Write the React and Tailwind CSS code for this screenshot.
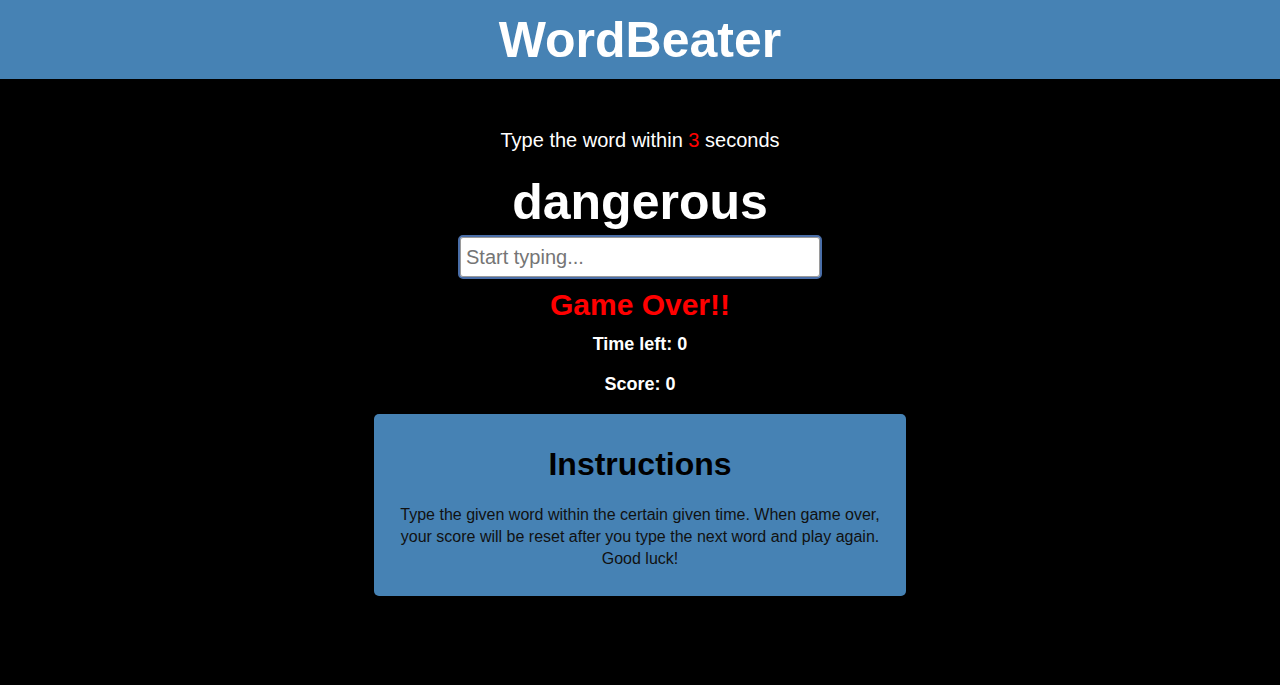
import { useState } from 'react'

export default function App() {
  const [value, setValue] = useState('')

  return (
    <div className="min-h-[685px] bg-black font-['Liberation_Sans',Arial,sans-serif]">
      {/* Header */}
      <header className="h-[79px] bg-[#4682b4] flex items-center justify-center">
        <h1 className="text-white font-bold text-[50px] leading-none">WordBeater</h1>
      </header>

      <main className="flex flex-col items-center">
        <p className="mt-[51px] text-white text-[20px] leading-none">
          Type the word within <span className="text-[#ff0000]">3</span> seconds
        </p>

        <h2 className="mt-[27px] text-white font-bold text-[50px] leading-none">dangerous</h2>

        <input
          autoFocus
          type="text"
          value={value}
          onChange={(e) => setValue(e.target.value)}
          placeholder="Start typing..."
          className="mt-[8px] w-[364px] h-[44px] bg-white rounded-[5px] border-2 border-[#4a6ea8] shadow-[inset_0_0_0_1px_#9a9a9a] outline-none px-[6px] text-[20px] text-black placeholder:text-[#757575]"
        />

        <p className="mt-[11px] text-[#ff0000] font-bold text-[30px] leading-none">Game Over!!</p>
        <p className="mt-[15px] text-white font-bold text-[18px] leading-none">Time left: 0</p>
        <p className="mt-[22px] text-white font-bold text-[18px] leading-none">Score: 0</p>

        {/* Instructions */}
        <div className="mt-[21px] w-[532px] bg-[#4682b4] rounded-[5px] pt-[34px] pb-[26px] px-[24px] text-center">
          <h3 className="text-black font-bold text-[32px] leading-none">Instructions</h3>
          <p className="mt-[24px] text-[#111] text-[16px] leading-[22px]">
            Type the given word within the certain given time. When game over, your score will be reset after you type the next word and play again. Good luck!
          </p>
        </div>
      </main>
    </div>
  )
}
